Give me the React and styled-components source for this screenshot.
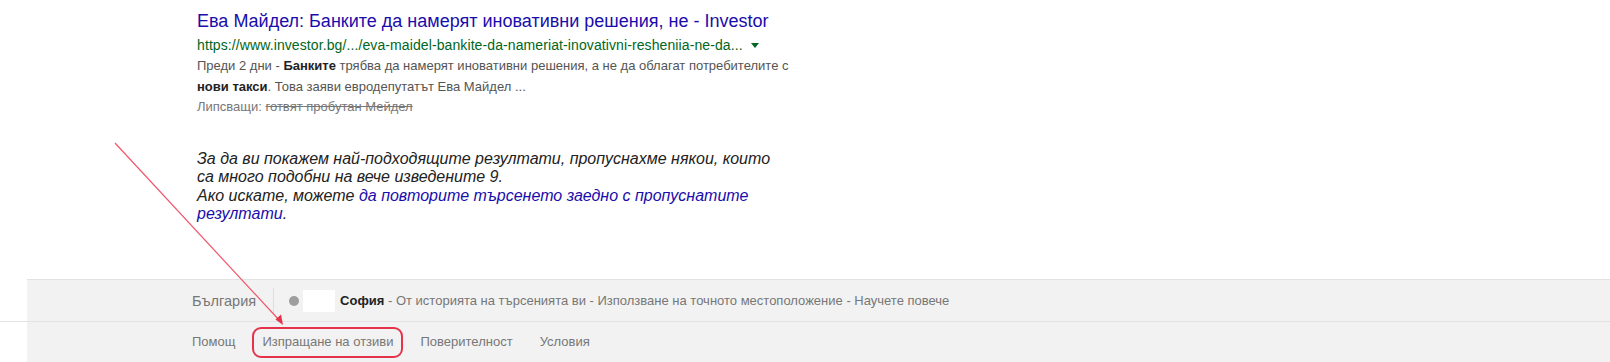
import styled, { createGlobalStyle } from "styled-components";

const GlobalStyle = createGlobalStyle`
  * {
    box-sizing: border-box;
  }
  body {
    margin: 0;
    background: #fff;
    font-family: "Liberation Sans", Arial, sans-serif;
  }
`;

const Page = styled.div`
  position: relative;
  width: 1610px;
  height: 362px;
  overflow: hidden;
  display: flex;
  flex-direction: column;
`;

const Content = styled.div`
  padding: 10px 0 0 197px;
  height: 279px;
  flex-shrink: 0;
`;

const Result = styled.div`
  width: 620px;
`;

const Title = styled.a`
  display: block;
  font-size: 18px;
  line-height: 22px;
  color: #1a0dab;
  text-decoration: none;
  white-space: nowrap;
`;

const Url = styled.div`
  margin-top: 3px;
  font-size: 14px;
  letter-spacing: 0.1px;
  line-height: 20px;
  color: #006621;
  display: flex;
  align-items: center;
  gap: 8px;
`;

const Caret = styled.span`
  width: 0;
  height: 0;
  border-left: 4px solid transparent;
  border-right: 4px solid transparent;
  border-top: 5px solid #006621;
`;

const Snippet = styled.div`
  margin-top: 1px;
  font-size: 13px;
  line-height: 20.5px;
  color: #545454;
  width: 600px;

  b {
    color: #222;
    font-weight: bold;
  }
`;

const Missing = styled.div`
  font-size: 13px;
  line-height: 20.5px;
  color: #777;

  s {
    color: #777;
  }
`;

const Notice = styled.p`
  margin: 32px 0 0;
  width: 590px;
  font-size: 16px;
  line-height: 18.5px;
  font-style: italic;
  color: #222;

  a {
    color: #1a0dab;
    text-decoration: none;
  }
`;

const FooterRow = styled.div`
  margin-left: 27px;
  background: #f2f2f2;
  display: flex;
  align-items: center;
  flex-shrink: 0;
  padding-left: 165px;
  height: ${(p) => p.$h};
  border-top: ${(p) => (p.$top ? "1px solid #e2e2e2" : "none")};
  font-size: 13px;
  color: #777;
`;

const Divider = styled.div`
  height: 1px;
  flex-shrink: 0;
  background: #e2e2e2;
`;

const Country = styled.span`
  font-size: 14.5px;
  padding-right: 17px;
  border-right: 1px solid #dedede;
  line-height: 26px;
`;

const Dot = styled.span`
  width: 10px;
  height: 10px;
  border-radius: 50%;
  background: #9e9e9e;
  margin-left: 15px;
`;

const Blank = styled.span`
  width: 32px;
  height: 22px;
  background: #fff;
  margin-left: 4px;
  margin-right: 5px;
`;

const Place = styled.span`
  color: #222;
  font-weight: bold;
`;

const FooterLink = styled.a`
  position: relative;
  color: #777;
  text-decoration: none;
  line-height: 16px;
  margin-right: 27px;

  &::after {
    content: "";
    display: ${(p) => (p.$marked ? "block" : "none")};
    position: absolute;
    inset: -7px -9px -8px -10px;
    border: 2px solid #e4334b;
    border-radius: 9px;
  }
`;

const Arrow = styled.svg`
  position: absolute;
  left: 0;
  top: 0;
  pointer-events: none;
`;

export default function App() {
  return (
    <Page>
      <GlobalStyle />
      <Content>
        <Result>
          <Title href="#">
            Ева Майдел: Банките да намерят иновативни решения, не - Investor
          </Title>
          <Url>
            https://www.investor.bg/.../eva-maidel-bankite-da-nameriat-inovativni-resheniia-ne-da...
            <Caret />
          </Url>
          <Snippet>
            Преди 2 дни - <b>Банките</b> трябва да намерят иновативни решения, а не
            да облагат потребителите с <b>нови такси</b>. Това заяви евродепутатът
            Ева Майдел ...
          </Snippet>
          <Missing>
            Липсващи: <s>готвят пробутан Мейдел</s>
          </Missing>
        </Result>
        <Notice>
          За да ви покажем най-подходящите резултати, пропуснахме някои, които
          са много подобни на вече изведените 9.
          <br />
          Ако искате, можете{" "}
          <a href="#">да повторите търсенето заедно с пропуснатите резултати</a>.
        </Notice>
      </Content>
      <FooterRow $top $h="42px">
        <Country>България</Country>
        <Dot />
        <Blank />
        <Place>София</Place>
        &nbsp;- От историята на търсенията ви - Използване на точното
        местоположение - Научете повече
      </FooterRow>
      <Divider />
      <FooterRow $h="40px">
        <FooterLink href="#">Помощ</FooterLink>
        <FooterLink href="#" $marked>
          Изпращане на отзиви
        </FooterLink>
        <FooterLink href="#">Поверителност</FooterLink>
        <FooterLink href="#">Условия</FooterLink>
      </FooterRow>
      <Arrow width="1610" height="362" viewBox="0 0 1610 362">
        <line x1="115" y1="143" x2="280" y2="321" stroke="#f0566a" strokeWidth="1.2" />
        <path d="M283 325 L275.5 319.5 L281 314.5 Z" fill="#e4334b" />
      </Arrow>
    </Page>
  );
}
